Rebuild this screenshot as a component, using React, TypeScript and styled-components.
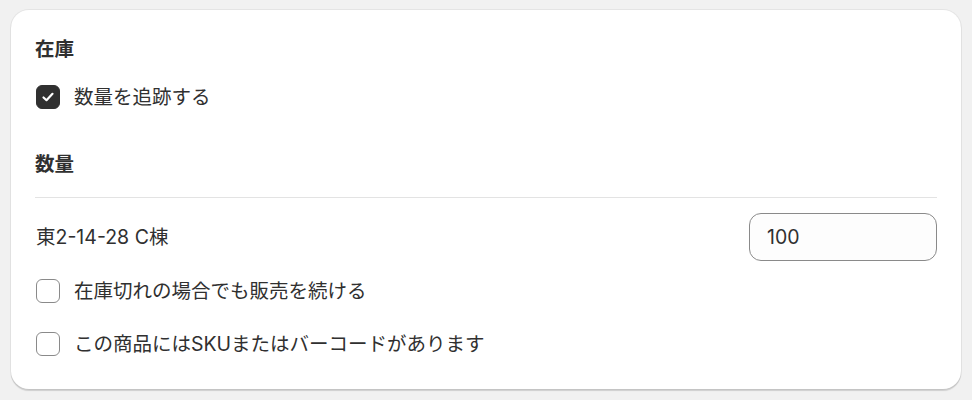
import React from "react";
import styled, { createGlobalStyle } from "styled-components";

const Global = createGlobalStyle`
  html, body { margin: 0; padding: 0; background: #f1f1f1; }
  body { font-family: "Inter", "Noto Sans CJK JP", sans-serif; color: #303030; }
  * { box-sizing: border-box; }
`;

const Page = styled.div`
  padding: 10px 11px;
`;

const Card = styled.section`
  background: #ffffff;
  border-radius: 18px;
  padding: 24px 24px 30px 24px;
  box-shadow: 0 0 0 1px rgba(0, 0, 0, 0.05), 0 1.5px 1px rgba(0, 0, 0, 0.14);
  display: flex;
  flex-direction: column;
`;

const Heading = styled.h2<{ $mt?: number }>`
  margin: ${(p) => p.$mt ?? 0}px 0 0 0;
  font-size: 19.5px;
  line-height: 30px;
  font-weight: 700;
  color: #303030;
`;

const CheckRow = styled.label<{ $mt: number }>`
  display: flex;
  align-items: center;
  gap: 14px;
  margin-top: ${(p) => p.$mt}px;
  height: 30px;
  font-size: 19.5px;
  line-height: 30px;
  color: #303030;
  padding-left: 1px;
`;

const Box = styled.span<{ $checked?: boolean }>`
  width: 24px;
  height: 24px;
  border-radius: 6px;
  flex: none;
  display: flex;
  align-items: center;
  justify-content: center;
  background: ${(p) => (p.$checked ? "#303030" : "#ffffff")};
  border: 1.5px solid ${(p) => (p.$checked ? "#303030" : "#8a8a8a")};
`;

const Divider = styled.hr`
  margin: 18px 0 0 0;
  border: none;
  border-top: 1px solid #e3e3e3;
  height: 0;
`;

const LocationRow = styled.div`
  margin-top: 15px;
  display: flex;
  align-items: center;
  justify-content: space-between;
  height: 48px;
  font-size: 19.5px;
  line-height: 30px;
  padding-left: 1px;
`;

const Input = styled.div`
  width: 188px;
  height: 48px;
  border: 1.5px solid #8a8a8a;
  border-radius: 12px;
  background: #fdfdfd;
  display: flex;
  align-items: center;
  padding-left: 17px;
  font-size: 19.5px;
  color: #303030;
`;

const Check = () => (
  <svg width="16" height="16" viewBox="0 0 16 16" fill="none">
    <path d="M3.5 8.5 L6.5 11.2 L12.5 4.8" stroke="#fff" strokeWidth="2.2" strokeLinecap="round" strokeLinejoin="round" />
  </svg>
);

export default function App() {
  return (
    <Page>
      <Global />
      <Card>
        <Heading>在庫</Heading>
        <CheckRow $mt={18}>
          <Box $checked><Check /></Box>
          数量を追跡する
        </CheckRow>
        <Heading $mt={37}>数量</Heading>
        <Divider />
        <LocationRow>
          <span>東2-14-28 C棟</span>
          <Input>100</Input>
        </LocationRow>
        <CheckRow $mt={15}>
          <Box />
          在庫切れの場合でも販売を続ける
        </CheckRow>
        <CheckRow $mt={23}>
          <Box />
          この商品にはSKUまたはバーコードがあります
        </CheckRow>
      </Card>
    </Page>
  );
}
